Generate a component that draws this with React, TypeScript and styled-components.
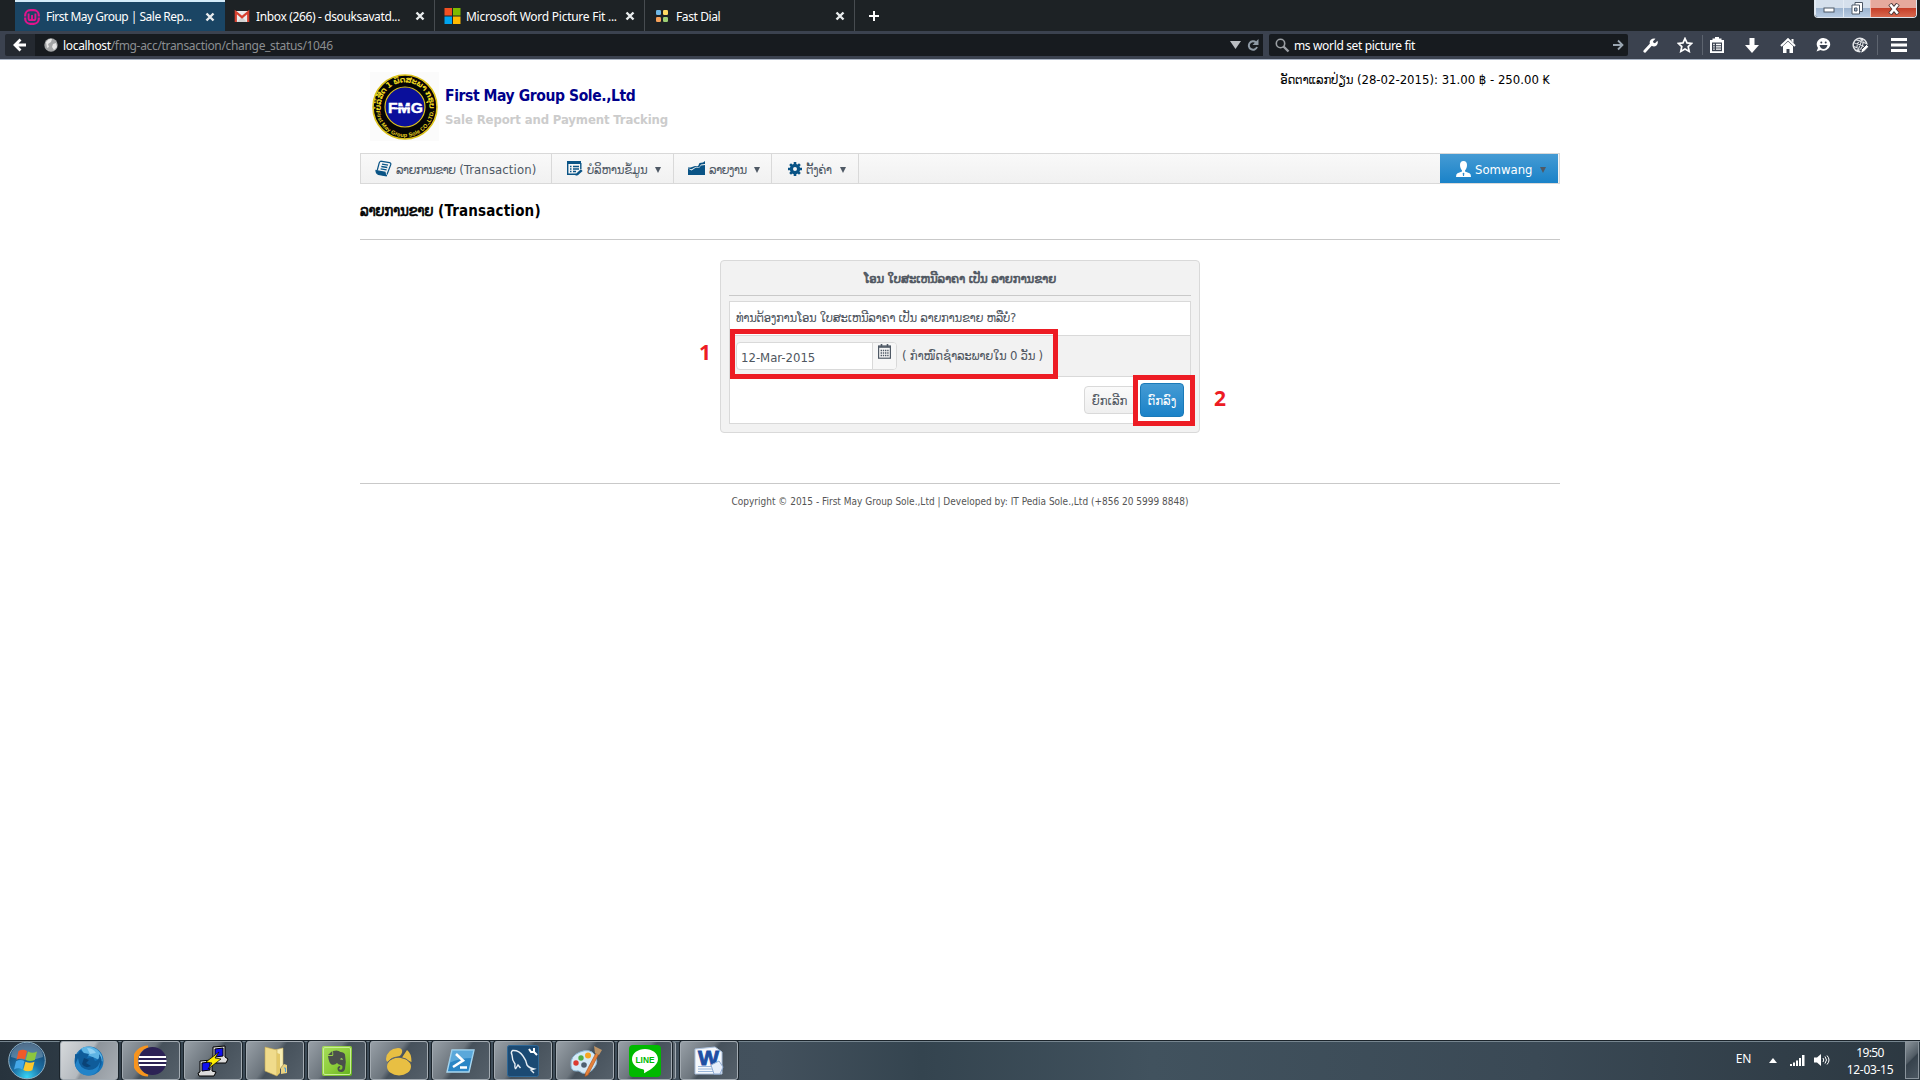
import React from "react";
import styled, { createGlobalStyle, css } from "styled-components";

const Global = createGlobalStyle`
  * { box-sizing: border-box; }
  body { margin: 0; background: #fff; font-family: "DejaVu Sans Condensed", "DejaVu Sans", sans-serif; font-size: 13px; color: #444; }
`;

const Desktop = styled.div`
  width: 1920px;
  height: 1080px;
  display: flex;
  flex-direction: column;
  overflow: hidden;
  background: #fff;
`;

const Label = styled.span<{ $size?: number; $ls?: number; $bold?: boolean; $color?: string; $ui?: boolean }>`
  display: block;
  flex: none;
  width: max-content;
  white-space: nowrap;
  font-size: ${(p) => p.$size ?? 13}px;
  letter-spacing: ${(p) => p.$ls ?? 0}px;
  font-weight: ${(p) => (p.$bold ? 700 : 400)};
  ${(p) => p.$color && css`color: ${p.$color};`}
  ${(p) => p.$ui && css`font-family: "Noto Sans", "Open Sans", sans-serif;`}
`;
/* Lao run: its bold is the regular face made heavier by a thin stroke */
const Lao = styled.span<{ $ls?: number; $heavy?: boolean }>`
  font-weight: 400;
  letter-spacing: ${(p) => p.$ls ?? 0}px;
  ${(p) => p.$heavy && css`-webkit-text-stroke: 0.6px currentColor;`}
`;

/* ---------- Browser chrome ---------- */

const TabStrip = styled.div`
  position: relative;
  height: 31px;
  flex: none;
  display: flex;
  padding-left: 15px;
  background: #1d2225;
`;

const Tab = styled.div<{ $active?: boolean; $line?: boolean }>`
  width: 210px;
  height: 31px;
  display: flex;
  align-items: center;
  padding: ${(p) => (p.$active ? 0 : 1)}px 10px 0 9px;
  border-top: ${(p) => (p.$active ? "2px solid #d3ebf9" : "0")};
  background: ${(p) => (p.$active ? "#1a4564" : "transparent")};
  box-shadow: ${(p) => (p.$line ? "inset -1px 0 #474c50" : "none")};
  color: #fff;
`;
const TabIcon = styled.div`
  width: 22px;
  height: 16px;
  flex: none;
  svg { display: block; }
`;
const TabText = styled.div`
  flex: 1;
  overflow: hidden;
`;
const NewTab = styled.div`
  width: 37px;
  display: flex;
  align-items: center;
  justify-content: center;
`;

const WindowControls = styled.div`
  position: absolute;
  right: 3px;
  top: 0;
  width: 103px;
  height: 18px;
  display: flex;
  border: 1px solid #dfe6ee;
  border-top: 0;
  border-radius: 0 0 4px 4px;
  overflow: hidden;
`;
const WinButton = styled.div<{ $close?: boolean }>`
  flex: ${(p) => (p.$close ? "0 0 46px" : "1")};
  display: flex;
  align-items: center;
  justify-content: center;
  border-left: 1px solid ${(p) => (p.$close ? "#f2c3ba" : "#e3ebf4")};
  background: ${(p) =>
    p.$close
      ? "linear-gradient(#e6a99d 0 45%, #c6402a 50%, #d9694f)"
      : "linear-gradient(#d5e0ec 0 45%, #9db4cf 50%, #b7cbe2)"};
`;

const Toolbar = styled.div`
  height: 29px;
  flex: none;
  display: flex;
  align-items: flex-start;
  padding: 3px 0 0 5px;
  background: #3b424f;
  border-bottom: 1px solid #a9b4c4;
`;
const Back = styled.div`
  width: 30px;
  height: 22px;
  display: flex;
  align-items: center;
  justify-content: center;
  background: #242930;
  border-radius: 2px 0 0 2px;
`;
const UrlField = styled.div`
  width: 1228px;
  height: 22px;
  display: flex;
  align-items: center;
  padding: 0 4px 0 9px;
  background: #171b1f;
  color: #8b8e91;
  b { font-weight: 400; color: #fff; }
`;
const Spacer = styled.div`
  flex: 1;
`;
const Gap = styled.div<{ $w: number }>`
  width: ${(p) => p.$w}px;
  flex: none;
`;
const SearchField = styled.div`
  width: 359px;
  height: 22px;
  margin-left: 6px;
  display: flex;
  align-items: center;
  padding: 0 4px 0 6px;
  background: #171b1f;
  border-radius: 2px;
  color: #fff;
`;
const Tools = styled.div`
  flex: 1;
  height: 22px;
  display: flex;
  align-items: center;
  padding-left: 4px;
`;
const Tool = styled.div<{ $w?: number }>`
  width: ${(p) => p.$w ?? 36}px;
  display: flex;
  justify-content: center;
`;
const ToolRule = styled.div`
  width: 1px;
  height: 20px;
  background: #5d646f;
`;

/* ---------- Page ---------- */

const Page = styled.main`
  flex: 1;
  width: 1200px;
  margin: 0 auto;
  display: flex;
  flex-direction: column;
`;
const Header = styled.header`
  height: 93px;
  display: flex;
  padding: 12px 10px 0;
`;
const Brand = styled.div`
  padding: 13px 0 0 6px;
  line-height: 23px;
`;
const Rate = styled.div`
  margin-left: auto;
  line-height: 16px;
  color: #000;
`;
const Menu = styled.nav`
  height: 31px;
  display: flex;
  border: 1px solid #d9d9d9;
  background: linear-gradient(#f9f9f9, #f1f1f1);
`;
const MenuItem = styled.div<{ $w: number; $user?: boolean }>`
  width: ${(p) => p.$w}px;
  height: 29px;
  display: flex;
  align-items: center;
  padding-left: ${(p) => (p.$user ? 16 : 14)}px;
  border-right: ${(p) => (p.$user ? "0" : "1px solid #d9d9d9")};
  color: ${(p) => (p.$user ? "#fff" : "#4f5965")};
  background: ${(p) => (p.$user ? "linear-gradient(#459bd4, #1a82c8)" : "transparent")};
  svg { flex: none; }
`;
const MenuText = styled.div<{ $w: number }>`
  width: ${(p) => p.$w}px;
  margin-left: 4px;
  padding-top: 1px;
  flex: none;
`;
const Caret = styled.i`
  margin-top: 3px;
  border: 3.5px solid transparent;
  border-top: 6px solid #4f5965;
  border-bottom: 0;
`;
const Title = styled.h1`
  height: 56px;
  margin: 0;
  padding-top: 17px;
  line-height: 20px;
  color: #000;
  border-bottom: 1px solid #c9c9c9;
`;

const Panel = styled.section`
  position: relative;
  width: 480px;
  height: 173px;
  margin: 20px auto 0;
  padding: 8px;
  background: #f2f2f2;
  border: 1px solid #d9d9d9;
  border-radius: 4px;
  color: #4f5660;
`;
const PanelTitle = styled.div`
  height: 27px;
  display: flex;
  justify-content: center;
  line-height: 19px;
  border-bottom: 1px solid #c9c9c9;
`;
const Table = styled.div`
  height: 123px;
  margin-top: 5px;
  display: flex;
  flex-direction: column;
  background: #fff;
  border: 1px solid #d9d9d9;
`;
const Question = styled.div`
  height: 33px;
  padding-left: 6px;
  line-height: 31px;
`;
const DateRow = styled.div`
  height: 42px;
  display: flex;
  align-items: center;
  padding-left: 6px;
  background: #f2f2f2;
  border-top: 1px solid #d9d9d9;
  border-bottom: 1px solid #d9d9d9;
`;
const DateInput = styled.div`
  width: 161px;
  height: 28px;
  display: flex;
  margin-right: 5px;
  background: #fff;
  border: 1px solid #d9d9d9;
  border-radius: 4px;
`;
const DateValue = styled.div`
  width: 135px;
  padding-left: 4px;
  line-height: 30px;
`;
const DateAddon = styled.div`
  flex: 1;
  padding: 1px 0 0 5px;
  background: #f7f7f7;
  border-left: 1px solid #d9d9d9;
  border-radius: 0 3px 3px 0;
`;
const DueText = styled.div`
  padding-bottom: 2px;
`;
const Actions = styled.div`
  flex: 1;
  display: flex;
  justify-content: flex-end;
  align-items: center;
  padding: 0 6px 0 0;
`;
const Button = styled.div<{ $primary?: boolean }>`
  width: ${(p) => (p.$primary ? 44 : 52)}px;
  height: ${(p) => (p.$primary ? 34 : 28)}px;
  margin-left: 4px;
  display: flex;
  align-items: center;
  justify-content: center;
  padding-right: ${(p) => (p.$primary ? 0 : 1)}px;
  border: 1px solid ${(p) => (p.$primary ? "#1a7ab9" : "#d9d9d9")};
  border-radius: 4px;
  color: ${(p) => (p.$primary ? "#fff" : "#4f5660")};
  background: ${(p) => (p.$primary ? "linear-gradient(#459bd4, #1a82c8)" : "linear-gradient(#fafafa, #efefef)")};
`;
/* Red marks laid over the form */
const Mark = styled.div<{ $x: number; $y: number; $w: number; $h: number }>`
  position: absolute;
  left: ${(p) => p.$x}px;
  top: ${(p) => p.$y}px;
  width: ${(p) => p.$w}px;
  height: ${(p) => p.$h}px;
  border: 5px solid #ed1c24;
`;
const MarkNumber = styled.div<{ $x: number; $y: number }>`
  position: absolute;
  left: ${(p) => p.$x}px;
  top: ${(p) => p.$y}px;
  font: 700 21px/24px "Open Sans", sans-serif;
  color: #ed1c24;
`;
const Footer = styled.footer`
  margin-top: 50px;
  padding-top: 10px;
  display: flex;
  justify-content: center;
  line-height: 16px;
  color: #555;
  border-top: 1px solid #c9c9c9;
`;

/* ---------- Taskbar ---------- */

const Taskbar = styled.div`
  height: 40px;
  flex: none;
  display: flex;
  background: linear-gradient(90deg, #27333d, #3c4a56 12%, #43515d 40%, #34444f 48%, #41525e 60%, #3a4955 80%, #2c3841);
  box-shadow: inset 0 1px #1b242b, inset 0 2px #76858f;
`;
const Start = styled.div`
  width: 60px;
  padding: 1px 0 0 7px;
`;
const Task = styled.div<{ $on?: boolean; $stack?: boolean }>`
  width: ${(p) => (p.$stack ? 54 : 58)}px;
  height: 39px;
  margin: 1px ${(p) => (p.$stack ? 8 : 4)}px 0 0;
  display: flex;
  align-items: center;
  justify-content: center;
  border: 1px solid #a3abb2;
  border-radius: 3px;
  background: ${(p) =>
    p.$on
      ? "linear-gradient(120deg, #d6d9dc, #b4b9be 45%, #8d949b 50%, #a9afb5)"
      : "linear-gradient(125deg, #98a0a7, #6c757d 42%, #46515b 50%, #55606a)"};
  box-shadow: 0 0 0 1px #1b242b${(p) => (p.$stack ? ", 4px 0 0 -1px #5b666f, 5px 0 0 -1px #a3abb2" : "")};
`;
const Tray = styled.div`
  margin-left: auto;
  display: flex;
  align-items: center;
  color: #fff;
`;
const Language = styled.div`
  margin: 0 18px 4px 0;
`;
const Clock = styled.div`
  width: 68px;
  margin: 0 1px 0 6px;
  display: flex;
  flex-direction: column;
  align-items: center;
  line-height: 17px;
  padding-top: 1px;
`;
const ShowDesktop = styled.div`
  width: 14px;
  height: 38px;
  margin-right: 1px;
  border: 1px solid #8a949c;
  background: linear-gradient(135deg, #8b949b, #525d66 45%, #36424c 50%, #4b5761);
`;

/* ---------- Icons ---------- */

const CloseX = () => (
  <svg width="10" height="10" viewBox="0 0 10 10">
    <path d="M1.5 1.5l7 7M8.5 1.5l-7 7" stroke="#e9eced" strokeWidth="2.4" />
  </svg>
);
const WampIcon = () => (
  <svg width="16" height="16" viewBox="0 0 16 16" fill="none" stroke="#e0148c">
    <rect x="1.2" y="1.2" width="13.6" height="13.6" rx="5" strokeWidth="2.2" />
    <path d="M0 8h3M13 8h3" stroke="#1a4564" strokeWidth="1" />
    <path d="M4.6 4.5v5q0 1.6 1.7 1.6T8 9.5V6v3.5q0 1.6 1.7 1.6t1.7-1.6v-5" strokeWidth="1.9" />
  </svg>
);
const GmailIcon = () => (
  <svg width="16" height="16" viewBox="0 0 16 16">
    <path d="M1 3h14v11H1z" fill="#ececec" />
    <path d="M3 14l5-5 5 5z" fill="#d2d2d2" />
    <path d="M1.8 14V4L8 9.2 14.2 4v10" fill="none" stroke="#d6402f" strokeWidth="2.2" />
  </svg>
);
const MsIcon = () => (
  <svg width="17" height="16" viewBox="0 0 16 16">
    <path d="M0 0h7.5v7.5H0z" fill="#f25022" />
    <path d="M8.5 0H16v7.5H8.5z" fill="#7fba00" />
    <path d="M0 8.5h7.5V16H0z" fill="#00a4ef" />
    <path d="M8.5 8.5H16V16H8.5z" fill="#ffb900" />
  </svg>
);
const DialIcon = () => (
  <svg width="16" height="16" viewBox="0 0 16 16">
    <rect x="2" y="2" width="5" height="5" rx="1.2" fill="#6fb7e6" />
    <rect x="9" y="2" width="5" height="5" rx="1.2" fill="#ffdb63" />
    <rect x="2" y="9" width="5" height="5" rx="1.2" fill="#f6a15a" />
    <rect x="9" y="9" width="5" height="5" rx="1.2" fill="#9dcf74" />
  </svg>
);

const Logo = () => (
  <svg width="69" height="69" viewBox="0 0 69 69">
    <rect width="69" height="69" fill="#fbfbfb" />
    <circle cx="35" cy="35" r="32" fill="#050505" stroke="#dcc21c" strokeWidth="1.6" />
    <circle cx="35" cy="35" r="20" fill="#0a0f9b" stroke="#dcc21c" strokeWidth="1.2" />
    <defs>
      <path id="arcTop" d="M12 43a24.4 24.4 0 1 1 46 0" />
      <path id="arcBottom" d="M6 36a29 29 0 0 0 58 0" />
    </defs>
    <text fontSize="8" fontWeight="700" fill="#ecd51f" fontFamily="DejaVu Sans">
      <textPath href="#arcTop" startOffset="4" textLength="82">ບໍລິສັດ 1 ພຶດສະພາ ກຣຸບ</textPath>
    </text>
    <text fontSize="5.6" fontWeight="700" fill="#ecd51f" fontFamily="Liberation Sans">
      <textPath href="#arcBottom" startOffset="3" textLength="85">First May Group Sole CO.,LTD.</textPath>
    </text>
    <text x="18" y="40.500" fontSize="15" fontWeight="700" fill="#fff" stroke="#fff" strokeWidth=".4" fontFamily="Liberation Sans" textLength="35" lengthAdjust="spacingAndGlyphs">FMG</text>
    <path d="M25 34.800h15" stroke="#0a0f9b" strokeWidth=".8" />
    <path d="M24 36.500h16" stroke="#fff" strokeWidth="1.400" />
  </svg>
);

const NAVY = "#0a5486";
const BookIcon = () => (
  <svg width="17" height="17" viewBox="0 0 17 17" fill="none" stroke={NAVY} strokeWidth="1.2">
    <path d="M5.500 1.200L14.500 2.600Q16.500 3.200 15.600 5L12 14.500M5.500 1.200Q4.600 1.800 4.200 3L2.200 10.500" />
    <path d="M1 10.500l9 1.800q0 2.600 1.800 3.700L3.500 14.400Q1 13.500 1 10.500z" fill={NAVY} />
    <path d="M7 4.200l6 1M6.300 6.500l6 1M5.600 8.800l6 1" strokeWidth="1.300" />
  </svg>
);
const FormIcon = () => (
  <svg width="17" height="17" viewBox="0 0 17 17">
    <path d="M1 1h14v3H1z" fill={NAVY} />
    <path d="M14.800 3v6M1.700 3v11.300H10" fill="none" stroke={NAVY} strokeWidth="1.400" />
    <path d="M4 6.500h1.500M7 6.500h6M4 9h1.500M7 9h6M4 11.500h1.500M7 11.500h3" stroke={NAVY} strokeWidth="1.400" />
    <path d="M9.500 15.800l.7-2.300 4.700-4.200 1.700 1.700-4.700 4.200z" fill={NAVY} />
  </svg>
);
const ChartIcon = () => (
  <svg width="17" height="17" viewBox="0 0 17 17">
    <path d="M0 15V8.500l3.500 2L8 7.500l3 .5 2-2.500 4-.5v10z" fill={NAVY} />
    <path d="M0 7.500h2.500L7 6l3 .3L11.500 3l3.500-.5 2-1.500v3l-4 .5-2 3-3-.8-4.500 2.500L0 8.500z" fill={NAVY} />
  </svg>
);
const GearIcon = () => (
  <svg width="14" height="14" viewBox="0 0 14 14">
    <path d="M7 0v14M0 7h14M2.100 2.100l9.800 9.800M11.900 2.100l-9.800 9.800" stroke={NAVY} strokeWidth="2.600" />
    <circle cx="7" cy="7" r="3.600" fill="#f6f6f6" stroke={NAVY} strokeWidth="3.200" />
  </svg>
);
const UserIcon = () => (
  <svg width="15" height="16" viewBox="0 0 15 16" fill="#fff">
    <path d="M7.500 0C4.900 0 4 1.800 4 4s1 4.500 2 5.500v1L1.500 12.300Q0 13 0 16h15q0-3-1.500-3.700L9 10.500v-1c1-1 2-3.300 2-5.500s-.9-4-3.500-4z" />
    <path d="M7.500 11.500l.8 1-.3 2.500h-1l-.3-2.500z" fill="#2d8dcd" />
  </svg>
);
const CalendarIcon = () => (
  <svg width="13" height="15" viewBox="0 0 13 15" fill="none" stroke="#4f5965">
    <rect x=".6" y="2" width="11.800" height="12.200" strokeWidth="1.200" />
    <path d="M0 3h13" strokeWidth="1.600" />
    <path d="M3.500 0v3M9.500 0v3" strokeWidth="1.600" />
    <path d="M2.600 6.500h8M2.600 9h8M2.600 11.500h8" strokeWidth="1.400" strokeDasharray="1.400 .8" />
  </svg>
);

const StartOrb = () => (
  <svg width="40" height="39" viewBox="0 0 40 39">
    <defs>
      <radialGradient id="orb" cx=".5" cy=".95" r=".9">
        <stop offset="0" stopColor="#38d4f5" />
        <stop offset=".45" stopColor="#1b6fa5" />
        <stop offset="1" stopColor="#173f66" />
      </radialGradient>
    </defs>
    <circle cx="20" cy="19.500" r="18.300" fill="url(#orb)" stroke="#8fb0c4" />
    <path d="M4 16a16 14 0 0 1 32 0q-16 6-32 0z" fill="#fff" opacity=".25" />
    <path d="M11.500 10q4.500-2.500 8.500 0l-2.200 8.500q-4.300-2-8.300.3z" fill="#ef5a28" />
    <path d="M21 10.500q4.500 2.500 9 0l-2.200 8.500q-4.800 2-9 0z" fill="#8cc63f" />
    <path d="M9 20.300q4.300-2.500 8.500-.3l-2.200 8.500q-4-2.300-8.300 0z" fill="#44a8e8" />
    <path d="M18.500 20.700q4.300 2 9 0l-2.200 8.500q-4.700 2.300-9-.3z" fill="#fcc72c" />
  </svg>
);
const FirefoxIcon = () => (
  <svg width="32" height="32" viewBox="0 0 32 32">
    <circle cx="16" cy="16" r="14.500" fill="#1573b8" />
    <path d="M8 3.500q8-4.500 16 1 6 5 5.500 12L22 13l-5-2-6-2z" fill="#5db4e4" />
    <path d="M14 3q6 0 9 5l-6 1z" fill="#8fd0f2" />
    <path d="M2 9q2 1 4-1l1-3 4 3 5 1-2 4 6-1 2 4q5-1 4-7 5 6 1 13t-12 7Q3 28 2 18z" fill="#0f5c9a" />
    <path d="M5 13q1 11 11 12 8 0 11-8-1 13-12 13.500Q5 30 2 20z" fill="#2283c8" />
    <path d="M11 13l5 2-3 3 5 3q-6 3-9-2z" fill="#0a4377" />
  </svg>
);
const EclipseIcon = () => (
  <svg width="34" height="32" viewBox="0 0 34 32">
    <path d="M14 1.500a14.500 14.500 0 0 0 0 29A15 15 0 0 1 14 1.500z" fill="#f7941e" stroke="#f7941e" strokeWidth="2" />
    <circle cx="18.500" cy="16" r="14" fill="#2c2255" />
    <path d="M5 12h27M4.500 16h28M5 20h27" stroke="#fff" strokeWidth="2" />
  </svg>
);
const PuttyIcon = () => (
  <svg width="32" height="32" viewBox="0 0 32 32" stroke="#000">
    <path d="M16 2l12-1v11l3 2-2 4H15l-1-3 2-2z" fill="#dcdcdc" />
    <path d="M18 4l8-1v8l-8 1z" fill="#1010ee" />
    <path d="M3 16l12-1v11l4 1-2 4H2l-1-3 2-1z" fill="#dcdcdc" />
    <path d="M5 18l8-1v8l-8 1z" fill="#1010ee" />
    <path d="M22 7L9 17l6 1-4 6 13-10-6-1z" fill="#ffee00" strokeWidth=".7" />
  </svg>
);
const FolderIcon = () => (
  <svg width="30" height="32" viewBox="0 0 30 32">
    <path d="M14 5l9-2v17l-8 10z" fill="#f8eeb4" stroke="#c9b266" strokeWidth=".6" />
    <path d="M5 2l12 3v26L5 26z" fill="#f0db8b" stroke="#c4a850" strokeWidth=".6" />
    <path d="M17 8l3 1v19l-3 3z" fill="#e3c868" />
    <path d="M24 19l3 1v8l-6 1v-6z" fill="#e9d180" />
    <path d="M24 23h1.500v4" stroke="#4b9fe0" fill="none" />
  </svg>
);
const EvernoteIcon = () => (
  <svg width="30" height="30" viewBox="0 0 30 30">
    <defs>
      <linearGradient id="ever" x2="1" y2="1">
        <stop offset="0" stopColor="#a6dc5c" />
        <stop offset=".5" stopColor="#8fcf3c" />
        <stop offset="1" stopColor="#5fae1c" />
      </linearGradient>
    </defs>
    <rect width="30" height="30" rx="2" fill="url(#ever)" />
    <rect x="1.500" y="1.500" width="27" height="27" rx="1.500" fill="none" stroke="#c9ee95" />
    <path d="M11 5q5-1.500 7.500 1 3.500 0 4.500 2.500 1.500 7 0 14.500Q22 26 19.500 26q-4 0-4-3.500 0-2.500 2.700-2.500v1.800q-1 0-1 1t1.500 1q1.800 0 1.800-3 0-1.500-2-1.800-2.500-.3-3.500-2Q13 19.500 9.500 18.500 7 17.500 6 10h4q1.300 0 1.300-1.300z" fill="#4a4f4c" />
    <path d="M6 9l4.300-4v4z" fill="#4a4f4c" />
    <path d="M18 13.500q.5-1.800 2-1.500l1 2q-1.500-.8-3-.5z" fill="#9bd45a" />
  </svg>
);
const PawIcon = () => (
  <svg width="32" height="32" viewBox="0 0 32 32" fill="#e8bf43">
    <ellipse cx="16" cy="21.500" rx="12" ry="9" />
    <path d="M3 14Q4 4 15 3q5 0 4 4.500-1 4-6 4.500-6 1-7 5-3 0-3-3zM19 12.500l5-7.500q4.500 3 4.500 12-4-1-9.500-4.500z" />
    <path d="M4.500 17.500q4-5.500 11.500-5.500 8 1 12 6" stroke="#5b6066" fill="none" />
  </svg>
);
const ShellIcon = () => (
  <svg width="30" height="26" viewBox="0 0 30 26">
    <path d="M6 2h22l-5 22H1z" fill="#2c86c5" stroke="#a9d7f0" strokeWidth="1.400" />
    <path d="M6 2h22l-2 8Q14 10 3 15z" fill="#7cc0e8" opacity=".6" />
    <path d="M10 6l7 6.500L7 19M14 19.500h7" fill="none" stroke="#fff" strokeWidth="2.600" />
  </svg>
);
const MysqlIcon = () => (
  <svg width="32" height="32" viewBox="0 0 32 32">
    <rect x=".5" y=".5" width="31" height="31" rx="2" fill="#1b4a73" stroke="#2f6896" />
    <path d="M8.500 24q-1-2-.5-5-3-4-3-9-1.500-3 .5-4.500Q12 5 16 11q3 4 4 9 2 3 7 4l-3 1 3 3M8.500 24l2.500-4 2.500 3" fill="none" stroke="#e7eef4" strokeWidth="1.400" />
    <path d="M22 4l2 3h3l3 3M27 3v4" fill="none" stroke="#fff" strokeWidth="2" />
  </svg>
);
const PaintIcon = () => (
  <svg width="34" height="32" viewBox="0 0 34 32">
    <path d="M3 20Q2 11 12 7q10-4 15 3 4 7-1 13-5 7-12 5-3-3-6-2-5 0-5-6z" fill="#d5e9f6" stroke="#88b4d3" />
    <circle cx="8" cy="18" r="2.700" fill="#dc3a30" />
    <circle cx="13" cy="13" r="2.700" fill="#4fae46" />
    <circle cx="20" cy="10.500" r="3" fill="#f6a623" />
    <circle cx="16" cy="20" r="2.800" fill="#4f6070" />
    <path d="M28 8l2.500 1.500L20 30l-3 1.500.5-3.500z" fill="#e5813a" stroke="#a4521c" strokeWidth=".6" />
    <path d="M26 1l8 4-3 5-4-2z" fill="#bd9467" />
  </svg>
);
const LineIcon = () => (
  <svg width="32" height="32" viewBox="0 0 32 32">
    <rect width="32" height="32" rx="4" fill="#00b900" />
    <path d="M16 4C9 4 3 8.200 3 14.300c0 5 4.500 8.900 11 9.900 1.500.3 1.200 1.700 1 4 3-1.500 14-7 14-13.900C29 8.200 23 4 16 4z" fill="#fff" />
    <text x="6.500" y="17.500" fontSize="8.500" fontWeight="700" fill="#00b900" fontFamily="Liberation Sans" textLength="19" lengthAdjust="spacingAndGlyphs">LINE</text>
  </svg>
);
const WordIcon = () => (
  <svg width="30" height="30" viewBox="0 0 30 30">
    <path d="M1 3l20-2 7 5v22H1z" fill="#f5f8fc" stroke="#a9bfdc" />
    <path d="M4 20.500h18M4 23h18M4 25.500h18" stroke="#9ab6da" />
    <text x="4" y="19" fontSize="20" fontWeight="700" fill="#1e4fa3" stroke="#1e4fa3" strokeWidth=".8" fontFamily="Liberation Sans" textLength="21" lengthAdjust="spacingAndGlyphs">W</text>
    <path d="M17 19l8-4 4 6-3 7h-6z" fill="#e7eefa" stroke="#8facd3" />
  </svg>
);

const tabs = [
  { text: "First May Group | Sale Rep...", icon: <WampIcon />, active: true, ls: -0.51 },
  { text: "Inbox (266) - dsouksavatd...", icon: <GmailIcon />, line: true, ls: -0.36 },
  { text: "Microsoft Word Picture Fit ...", icon: <MsIcon />, line: true, ls: -0.26 },
  { text: "Fast Dial", icon: <DialIcon />, line: true, ls: -0.4 },
];

export default function App() {
  return (
    <Desktop>
      <Global />
      <TabStrip>
        {tabs.map((t) => (
          <Tab key={t.text} $active={t.active} $line={t.line}>
            <TabIcon>{t.icon}</TabIcon>
            <TabText><Label $ui $size={12} $ls={t.ls}>{t.text}</Label></TabText>
            <CloseX />
          </Tab>
        ))}
        <NewTab>
          <svg width="12" height="12" viewBox="0 0 12 12"><path d="M6 1v10M1 6h10" stroke="#fff" strokeWidth="2" /></svg>
        </NewTab>
        <WindowControls>
          <WinButton><svg width="12" height="10" viewBox="0 0 12 10"><rect x="1" y="4" width="10" height="4" fill="#fff" stroke="#4d5866" /></svg></WinButton>
          <WinButton><svg width="12" height="13" viewBox="0 0 12 13" fill="#fff" stroke="#4d5866"><path d="M4 .500h7.500v9H4z" /><path d="M1 3h7.500v9H1z" /><path d="M3.500 6h2.500v3H3.500z" fill="#9db4cf" /></svg></WinButton>
          <WinButton $close><svg width="14" height="12" viewBox="0 0 14 12"><path d="M3 1l8 10M11 1L3 11" stroke="#4d3a3a" strokeWidth="4.400" /><path d="M3.300 1.500l7.400 9M10.700 1.500l-7.400 9" stroke="#fff" strokeWidth="2.600" /></svg></WinButton>
        </WindowControls>
      </TabStrip>

      <Toolbar>
        <Back>
          <svg width="14" height="14" viewBox="0 0 14 14"><path d="M7.500 1.500L2 7l5.500 5.500M2 7h11" fill="none" stroke="#fff" strokeWidth="2.800" /></svg>
        </Back>
        <UrlField>
          <svg width="14" height="14" viewBox="0 0 14 14"><circle cx="7" cy="7" r="6.700" fill="#a3a5a6" /><path d="M2 4q3-4 6-3l-1 3-3 2 1 3-2 1zM9 6l3-1 1 4-3 3-2-3z" fill="#e6e6e6" /></svg>
          <Gap $w={5} />
          <Label $ui $size={12} $ls={-0.33}><b>localhost</b>/fmg-acc/transaction/change_status/1046</Label>
          <Spacer />
          <svg width="11" height="8" viewBox="0 0 11 8"><path d="M0 0h11L5.500 8z" fill="#b9bdc1" /></svg>
          <Gap $w={6} />
          <svg width="12" height="12" viewBox="0 0 12 12"><path d="M9 3.500A4.200 4.200 0 1 0 10 8" fill="none" stroke="#8e9aa5" strokeWidth="2" /><path d="M11.500 0v6H5.500z" fill="#8e9aa5" /></svg>
        </UrlField>
        <SearchField>
          <svg width="15" height="15" viewBox="0 0 15 15" fill="none" stroke="#9b9fa3"><circle cx="5.500" cy="5.500" r="4.200" strokeWidth="1.600" /><path d="M8.500 8.500l5 5" strokeWidth="2.400" /></svg>
          <Gap $w={4} />
          <Label $ui $size={12} $ls={-0.35}>ms world set picture fit</Label>
          <Spacer />
          <svg width="11" height="12" viewBox="0 0 11 12"><path d="M0 6h9M5 1.500L9.500 6 5 10.500" fill="none" stroke="#9aa6b1" strokeWidth="1.800" /></svg>
        </SearchField>
        <Tools>
          <Tool $w={36}><svg width="15" height="15" viewBox="0 0 15 15"><path d="M1.800 13.200l6.200-6.700" stroke="#fff" strokeWidth="2.800" strokeLinecap="round" /><path d="M12.500.700L10 3.200l.5 1.500 1.500.5 2.500-2.500q1 3-1 4.800-2 1.500-4.500.5l-2-2Q6 3.500 7.800 1.700 10 0 12.500.700z" fill="#fff" /></svg></Tool>
          <Tool $w={34}><svg width="16" height="16" viewBox="0 0 16 16"><path d="M8 1.500l2 4.400 4.700.5-3.500 3.200 1 4.800L8 12l-4.200 2.400 1-4.800L1.300 6.400 6 5.900z" fill="none" stroke="#fff" strokeWidth="1.700" /></svg></Tool>
          <ToolRule />
          <Tool $w={28}><svg width="14" height="16" viewBox="0 0 14 16"><path d="M5 0h4v1.500h2.500V3H14v13H0V3h2.500V1.500H5z" fill="#fff" /><path d="M2 5.500h10v8.700H2z" fill="#3b424f" /><path d="M3.200 7.500h1.500M6 7.500h5M3.200 9.800h1.500M6 9.800h5M3.200 12.100h1.500M6 12.100h5" stroke="#fff" strokeWidth="1.300" /></svg></Tool>
          <Tool $w={41}><svg width="14" height="15" viewBox="0 0 14 15"><path d="M4.500 0h5v7H14l-7 8-7-8h4.500z" fill="#fff" /></svg></Tool>
          <Tool $w={32}><svg width="16" height="15" viewBox="0 0 16 15"><path d="M1 8l7-6.800L15 8" fill="none" stroke="#fff" strokeWidth="2" /><path d="M3 8l5-4.500L13 8v7H9.500v-4h-3v4H3zM11.500 1h2v4l-2-2z" fill="#fff" /></svg></Tool>
          <Tool $w={39}><svg width="15" height="14" viewBox="0 0 15 14"><path d="M7.500 0a6.800 6.300 0 1 1-3 12L.5 13.500 2 10A6.500 6.300 0 0 1 7.500 0z" fill="#fff" /><circle cx="5.300" cy="4.500" r="1" fill="#3b424f" /><circle cx="9.700" cy="4.500" r="1" fill="#3b424f" /><path d="M3.500 7h8q-1 4-4 4t-4-4z" fill="#3b424f" /></svg></Tool>
          <Tool $w={34}><svg width="17" height="17" viewBox="0 0 17 17" fill="none" stroke="#e3e5e8"><g transform="rotate(20 8 8)"><circle cx="8" cy="8" r="6.800" strokeWidth="1.500" /><path d="M1 8h14M2.500 4.500h11M2.500 11.500h11M8 1v14M8 1q-5.500 7 0 14M8 1q5.500 7 0 14" /></g><path d="M8.500 16.500l1-4 5-5 2.300 2.300-5 5z" fill="#fff" stroke="#3b424f" strokeWidth="1" /></svg></Tool>
          <ToolRule />
          <Tool $w={42}><svg width="16" height="14" viewBox="0 0 16 14"><path d="M0 1.500h16M0 7h16M0 12.500h16" stroke="#fff" strokeWidth="3" /></svg></Tool>
        </Tools>
      </Toolbar>

      <Page>
        <Header>
          <Logo />
          <Brand>
            <Label $bold $size={15.5} $ls={-0.4} $color="#00008b">First May Group Sole.,Ltd</Label>
            <Label $bold $size={13} $ls={-0.12} $color="#ccc">Sale Report and Payment Tracking</Label>
          </Brand>
          <Rate><Label><Lao $ls={-0.2}>ອັດຕາແລກປ່ຽນ</Lao> (28-02-2015): 31.00 ฿ - 250.00 ₭</Label></Rate>
        </Header>
        <Menu>
          <MenuItem $w={191}><BookIcon /><MenuText $w={150}><Label $ls={0.1}><Lao $ls={-0.75}>ລາຍການຂາຍ</Lao> (Transaction)</Label></MenuText></MenuItem>
          <MenuItem $w={122}><FormIcon /><MenuText $w={68}><Label><Lao $ls={-0.25}>ບໍລິຫານຂໍ້ມູນ</Lao></Label></MenuText><Caret /></MenuItem>
          <MenuItem $w={98}><ChartIcon /><MenuText $w={45}><Label><Lao $ls={-0.7}>ລາຍງານ</Lao></Label></MenuText><Caret /></MenuItem>
          <MenuItem $w={87}><Gap $w={2} /><GearIcon /><MenuText $w={34}><Label><Lao $ls={-0.5}>ຕັ້ງຄ່າ</Lao></Label></MenuText><Caret /></MenuItem>
          <Spacer />
          <MenuItem $w={118} $user><UserIcon /><MenuText $w={65}><Label>Somwang</Label></MenuText><Caret /></MenuItem>
          <Gap $w={1} />
        </Menu>
        <Title><Label $bold $size={15} $ls={0.18}><Lao $heavy $ls={-0.35}>ລາຍການຂາຍ</Lao> (Transaction)</Label></Title>

        <Panel>
          <PanelTitle><Label><Lao $heavy $ls={-0.15}>ໂອນ ໃບສະເຫນີລາຄາ ເປັນ ລາຍການຂາຍ</Lao></Label></PanelTitle>
          <Table>
            <Question><Label><Lao $ls={-0.35}>ທ່ານຕ້ອງການໂອນ ໃບສະເຫນີລາຄາ ເປັນ ລາຍການຂາຍ ຫລືບໍ່?</Lao></Label></Question>
            <DateRow>
              <DateInput>
                <DateValue><Label>12-Mar-2015</Label></DateValue>
                <DateAddon><CalendarIcon /></DateAddon>
              </DateInput>
              <DueText><Label><Lao $ls={-0.27}>( ກຳໜົດຊຳລະພາຍໃນ 0 ວັນ )</Lao></Label></DueText>
            </DateRow>
            <Actions>
              <Button><Label>ຍົກເລີກ</Label></Button>
              <Button $primary><Label>ຕົກລົງ</Label></Button>
            </Actions>
          </Table>
          <Mark $x={9} $y={68} $w={328} $h={50} />
          <Mark $x={412} $y={114} $w={62} $h={51} />
          <MarkNumber $x={-22} $y={79}>1</MarkNumber>
          <MarkNumber $x={493} $y={125}>2</MarkNumber>
        </Panel>

        <Footer><Label $size={10}>Copyright © 2015 - First May Group Sole.,Ltd | Developed by: IT Pedia Sole.,Ltd (+856 20 5999 8848)</Label></Footer>
      </Page>

      <Taskbar>
        <Start><StartOrb /></Start>
        <Task $on><FirefoxIcon /></Task>
        <Task><EclipseIcon /></Task>
        <Task><PuttyIcon /></Task>
        <Task><FolderIcon /></Task>
        <Task><EvernoteIcon /></Task>
        <Task><PawIcon /></Task>
        <Task><ShellIcon /></Task>
        <Task><MysqlIcon /></Task>
        <Task><PaintIcon /></Task>
        <Task $stack><LineIcon /></Task>
        <Task><WordIcon /></Task>
        <Tray>
          <Language><Label $ui $size={12} $ls={-0.3}>EN</Label></Language>
          <svg width="8" height="5" viewBox="0 0 8 5"><path d="M4 0l4 5H0z" fill="#fff" /></svg>
          <Gap $w={13} />
          <svg width="16" height="14" viewBox="0 0 16 14" fill="#fff"><path d="M0 11h2v2H0zM3 9.500h2V13H3zM6 7.500h2V13H6zM9 5h2v8H9zM12 2h2.500v11H12z" /></svg>
          <Gap $w={8} />
          <svg width="16" height="14" viewBox="0 0 16 14"><path d="M0 4.500h3L7 1v12L3 9.500H0z" fill="#fff" /><path d="M9 5q1.500 2 0 4M11 3.500q3 3.500 0 7M13 2.500q4 4.500 0 9" fill="none" stroke="#fff" /></svg>
          <Clock><Label $ui $size={12} $ls={-0.6}>19:50</Label><Label $ui $size={12} $ls={-0.3}>12-03-15</Label></Clock>
          <ShowDesktop />
        </Tray>
      </Taskbar>
    </Desktop>
  );
}
